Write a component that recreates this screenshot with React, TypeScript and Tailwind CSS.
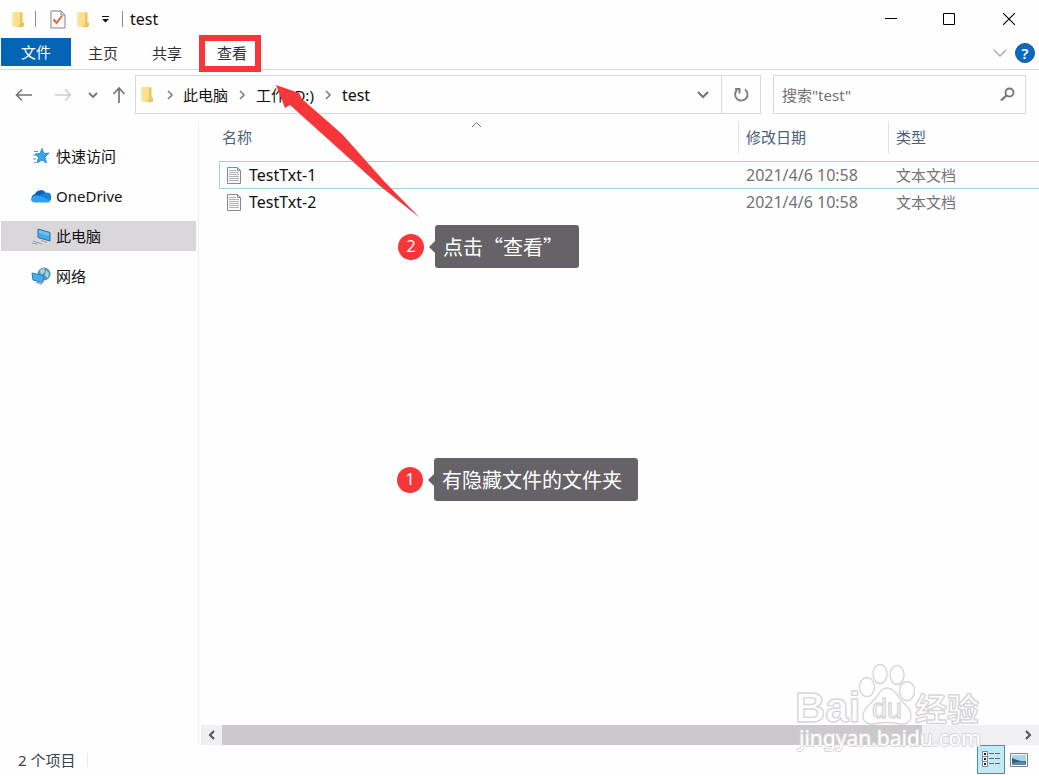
import React from "react";

const files = [
  { name: "TestTxt-1", date: "2021/4/6 10:58", type: "文本文档", focused: true },
  { name: "TestTxt-2", date: "2021/4/6 10:58", type: "文本文档", focused: false },
];

const FolderIcon = () => (
  <svg width="14" height="17" viewBox="0 0 14 17">
    <path d="M1 1h9v11l-2 4-7-1z" fill="#f6d57a" />
    <path d="M1 1h2v15l-2-1z" fill="#fae8ae" />
    <path d="M9 1.500h2.500v10H13V15l-1 1H6l3-3z" fill="#ecc45f" />
    <path d="M3 1h6v12l-2 2.500H3z" fill="#fbe08e" />
  </svg>
);

const CheckDocIcon = () => (
  <svg width="16" height="19" viewBox="0 0 16 19">
    <path d="M1 1h10l4 4v13H1z" fill="#fafafa" stroke="#858589" />
    <path d="M11 1v4h4" fill="none" stroke="#858589" />
    <path d="M3.500 9.500l3 3.500 5.500-7" fill="none" stroke="#dd6a3c" strokeWidth="2" />
  </svg>
);

const TextFileIcon = () => (
  <svg width="16" height="19" viewBox="0 0 16 19">
    <path d="M1.500 1.500h10l3 3v13h-13z" fill="#fbfbfb" stroke="#89878b" />
    <path d="M11.500 1.500v3h3" fill="none" stroke="#89878b" />
    <path
      d="M3 4.500h7M3 6.500h10M3 8.500h10M3 10.500h10M3 12.500h10M3 14.500h10"
      stroke="#b3b1b5"
    />
  </svg>
);

const ChevronRight = () => (
  <svg width="8" height="10" viewBox="0 0 8 10" fill="none" stroke="#7a787c" strokeWidth="1.5">
    <path d="M2 1l4 4-4 4" />
  </svg>
);

const StarIcon = () => (
  <svg width="20" height="18" viewBox="0 0 20 18">
    <path
      d="M11 1.500l2 5 5-.5-4 4 1.500 6-4.500-3-5 3 1.500-5.500L4 7l5-.5z"
      fill="#35a5ee"
      stroke="#1f7fc4"
      strokeWidth="0.8"
    />
    <path d="M3 4.500h4M2 8h3M2 12h3M3 15.500h2" stroke="#4a9ccf" />
  </svg>
);

const CloudIcon = () => (
  <svg width="20" height="14" viewBox="0 0 20 14">
    <path d="M4 5a6 5.500 0 0 1 11-1L10 9 2 12A4 4 0 0 1 4 5z" fill="#0c5fb5" />
    <path d="M14.500 4a4.500 4.500 0 0 1 4 8L8 8c2-3 4-4.500 6.500-4z" fill="#1583d8" />
    <path d="M0 10C1 7 6 5 9 7l10.500 4.500c-.5 1-1.500 2-2.500 2H4C1.500 13.500 0 12 0 10z" fill="#2ba2ed" />
  </svg>
);

const ComputerIcon = () => (
  <svg width="20" height="18" viewBox="0 0 20 18">
    <path d="M7 2l12 3.500v8.500L7 10.500z" fill="#43abee" stroke="#3b6f9b" />
    <path d="M8 3l10 3v3L8 6z" fill="#6cc3f7" />
    <path d="M10 13l6 2.500M2 14l9 3M1 16l5 1" stroke="#9b9ca4" />
  </svg>
);

const NetworkIcon = () => (
  <svg width="20" height="18" viewBox="0 0 20 18">
    <circle cx="13" cy="7" r="6.500" fill="#5793b5" />
    <path d="M9 3l4-2 1 4-4 3zM15 3l3 3-1 5-3-2z" fill="#a8d4df" />
    <path d="M1 6l11 2.500v7L2 13z" fill="#43b1f1" stroke="#2b7eb5" />
    <path d="M5 15l6 2" stroke="#8aa1ae" strokeWidth="1.500" />
  </svg>
);

const places = [
  { label: "快速访问", icon: <StarIcon />, active: false },
  { label: "OneDrive", icon: <CloudIcon />, active: false },
  { label: "此电脑", icon: <ComputerIcon />, active: true },
  { label: "网络", icon: <NetworkIcon />, active: false },
];

const TitleBar = () => (
  <header className="flex h-[38px] items-center pl-[11px]">
    <FolderIcon />
    <span className="ml-2.5 h-4 w-px bg-[#8d8b8f]" />
    <button type="button" aria-label="属性" className="ml-3.5">
      <CheckDocIcon />
    </button>
    <button type="button" aria-label="新建文件夹" className="ml-2.5">
      <FolderIcon />
    </button>
    <button type="button" aria-label="自定义快速访问工具栏" className="ml-[11px]">
      <svg width="9" height="8" viewBox="0 0 9 8">
        <path d="M1 1.500h7" stroke="#111" />
        <path d="M1 4h7L4.500 7.500z" fill="#111" />
      </svg>
    </button>
    <span className="ml-3 h-4 w-px bg-[#8d8b8f]" />
    <h1 className="ml-[7px] text-base leading-5">test</h1>
    <div className="ml-auto flex h-full">
      <button type="button" aria-label="最小化" className="flex w-[58px] items-center justify-center">
        <svg width="12" height="12" viewBox="0 0 12 12" stroke="#000">
          <path d="M0 5.500h12" />
        </svg>
      </button>
      <button type="button" aria-label="最大化" className="flex w-[58px] items-center justify-center">
        <svg width="12" height="12" viewBox="0 0 12 12" fill="none" stroke="#000">
          <path d="M.5.5h11v11H.5z" />
        </svg>
      </button>
      <button type="button" aria-label="关闭" className="flex w-[61px] items-center justify-center">
        <svg width="12" height="12" viewBox="0 0 12 12" stroke="#000" strokeWidth="1.100">
          <path d="M0 0l12 12M12 0L0 12" />
        </svg>
      </button>
    </div>
  </header>
);

const Ribbon = () => (
  <nav className="flex h-8 border-b border-[#d9d8da] pl-px leading-5">
    <button type="button" className="h-7 w-[70px] bg-[#0564b4] text-white">
      文件
    </button>
    <button type="button" className="h-[30px] w-16 text-[#2f2e31]">
      主页
    </button>
    <button type="button" className="h-[30px] w-16 text-[#2f2e31]">
      共享
    </button>
    <button type="button" className="relative h-[30px] w-[66px] text-[#2f2e31]">
      查看
      {/* Highlight frame */}
      <span className="absolute -top-[3px] left-0 h-[37px] w-[62px] border-6 border-[#f63638]" />
    </button>
    <div className="ml-auto flex items-center gap-2 pr-1 pb-0.5">
      <button type="button" aria-label="展开功能区">
        <svg width="14" height="8" viewBox="0 0 14 8" fill="none" stroke="#aaa8ac" strokeWidth="1.300">
          <path d="M1 1l6 6 6-6" />
        </svg>
      </button>
      <button
        type="button"
        aria-label="帮助"
        className="h-5 w-5 rounded-full border border-[#24517c] bg-[#0c69c3] text-[15px] leading-[18px] font-semibold text-white"
      >
        ?
      </button>
    </div>
  </nav>
);

const AddressBar = () => (
  <div className="flex h-[51px] pt-[5px] pr-[13px]">
    <div className="flex h-[39px] w-[135px] shrink-0 items-center pl-[15px] text-[#747276]">
      <button type="button" aria-label="后退">
        <svg width="18" height="14" viewBox="0 0 18 14" fill="none" stroke="currentColor" strokeWidth="1.600">
          <path d="M17 7H2M7 1.500L1.500 7 7 12.500" />
        </svg>
      </button>
      <button type="button" aria-label="前进" className="ml-[21px] text-[#cfcdd1]">
        <svg width="18" height="14" viewBox="0 0 18 14" fill="none" stroke="currentColor" strokeWidth="1.500">
          <path d="M1 7h15M11 1.500L16.500 7 11 12.500" />
        </svg>
      </button>
      <button type="button" aria-label="最近位置" className="ml-4">
        <svg width="10" height="8" viewBox="0 0 10 8" fill="none" stroke="currentColor" strokeWidth="1.800">
          <path d="M1 2l4 4 4-4" />
        </svg>
      </button>
      <button type="button" aria-label="上移" className="ml-3.5">
        <svg width="14" height="17" viewBox="0 0 14 17" fill="none" stroke="currentColor" strokeWidth="1.700">
          <path d="M7 17V2M1.500 8L7 2l5.500 6" />
        </svg>
      </button>
    </div>

    <div className="flex h-[39px] min-w-0 flex-1 items-center border border-[#d9d8da] pl-1">
      <FolderIcon />
      <span className="mr-[9px] ml-3">
        <ChevronRight />
      </span>
      <a href="#pc">此电脑</a>
      <span className="mx-2.5">
        <ChevronRight />
      </span>
      <a href="#d">工作 (D:)</a>
      <span className="mx-2.5">
        <ChevronRight />
      </span>
      <a href="#test" className="text-base leading-5">
        test
      </a>
      <button type="button" aria-label="历史记录" className="mr-3 ml-auto">
        <svg width="12" height="8" viewBox="0 0 12 8" fill="none" stroke="#747276" strokeWidth="2">
          <path d="M1 1l5 5 5-5" />
        </svg>
      </button>
      <button
        type="button"
        aria-label="刷新"
        className="flex h-full w-[39px] items-center justify-center border-l border-[#d9d8da]"
      >
        <svg width="16" height="16" viewBox="0 0 16 16" fill="none" stroke="#7d7b7f" strokeWidth="1.900">
          <path d="M12 2.500A6.200 6.200 0 1 1 4 3" />
          <path d="M2 2h4.500v4.500" />
        </svg>
      </button>
    </div>

    <div className="ml-3 flex h-[39px] w-[253px] items-center border border-[#d9d8da] pr-[9px] pl-2">
      <input
        type="text"
        aria-label="搜索"
        placeholder={'搜索"test"'}
        className="min-w-0 flex-1 bg-transparent outline-none placeholder:text-[#737175]"
      />
      <button type="button" aria-label="开始搜索">
        <svg width="17" height="15" viewBox="0 0 17 15" fill="none" stroke="#747276" strokeWidth="1.800">
          <circle cx="10.500" cy="5.500" r="4" />
          <path d="M7.500 8.500L2 13.500" strokeWidth="2.200" />
        </svg>
      </button>
    </div>
  </div>
);

const Sidebar = () => (
  <aside className="flex w-[199px] shrink-0 flex-col gap-2.5 border-r border-[#efeef0] pt-5 pr-0.5 pl-px">
    {places.map((place) => (
      <a
        key={place.label}
        href={"#" + place.label}
        className={
          place.active
            ? "flex h-[30px] items-center gap-[5px] bg-[#d9d7da] pl-[30px]"
            : "flex h-[30px] items-center gap-[5px] pl-[30px]"
        }
      >
        {place.icon}
        {place.label}
      </a>
    ))}
  </aside>
);

const FileTable = () => (
  <div className="relative flex-1 overflow-hidden pl-5">
    <table className="w-full table-fixed border-separate border-spacing-0 text-left">
      <thead className="text-[#4c6078]">
        <tr>
          <th className="w-[519px] p-0 pb-2 font-normal">
            <div className="h-8 pl-[3px] leading-8">名称</div>
          </th>
          <th className="w-[150px] p-0 pb-2 font-normal">
            <div className="h-8 border-l border-[#e2e1e3] pl-[7px] leading-8">修改日期</div>
          </th>
          <th className="p-0 pb-2 font-normal">
            <div className="h-8 border-l border-[#e2e1e3] pl-[7px] leading-8">类型</div>
          </th>
        </tr>
      </thead>
      <tbody>
        {files.map((file) => {
          const line = file.focused ? "border-y border-[#a5cfe0]" : "";
          return (
            <tr key={file.name} className="leading-[26px]">
              <td
                className={
                  "p-0 text-base leading-[26px] " +
                  (file.focused ? "border border-r-0 border-[#a5cfe0]" : "border-l border-transparent")
                }
              >
                <span className="flex h-[26px] items-center gap-[7px] pl-1.5">
                  <TextFileIcon />
                  {file.name}
                </span>
              </td>
              <td className={"p-0 pl-2 text-base leading-[26px] text-[#737175] " + line}>{file.date}</td>
              <td className={"p-0 pl-2 leading-[26px] text-[#737175] " + line}>{file.type}</td>
            </tr>
          );
        })}
      </tbody>
    </table>
    {/* Sort direction mark */}
    <svg
      className="absolute top-0 left-[272px]"
      width="11"
      height="7"
      viewBox="0 0 11 7"
      fill="none"
      stroke="#6d6b6f"
    >
      <path d="M1 6l4.500-4.500L10 6" />
    </svg>
  </div>
);

const ScrollBar = () => (
  <div className="ml-0.5 flex h-5 bg-[#f0eff1]">
    <button type="button" aria-label="向左滚动" className="flex w-[21px] items-center justify-center">
      <svg width="8" height="10" viewBox="0 0 8 10" fill="none" stroke="#535155" strokeWidth="2">
        <path d="M6 1L2 5l4 4" />
      </svg>
    </button>
    <div className="flex-1">
      <div className="h-full w-[88%] bg-[#cbc9cc]" />
    </div>
    <button type="button" aria-label="向右滚动" className="flex w-[22px] items-center justify-center">
      <svg width="8" height="10" viewBox="0 0 8 10" fill="none" stroke="#535155" strokeWidth="2">
        <path d="M2 1l4 4-4 4" />
      </svg>
    </button>
  </div>
);

const StatusBar = () => (
  <footer className="flex h-[31px] items-center pb-0.5 pl-[18px] text-[#344352]">
    <span>2 个项目</span>
    <span className="ml-3 h-3.5 w-px bg-[#ecebed]" />
    <div className="ml-auto flex items-center gap-[5px] pr-[11px]">
      <button
        type="button"
        aria-label="详细信息"
        className="flex h-[29px] w-7 items-center justify-center border border-[#3f96ab] bg-[#c5e8f4]"
      >
        <svg width="19" height="17" viewBox="0 0 19 17" fill="none">
          <path d="M.5.5h5v5h-5zM.5 5.500h5v5h-5zM.5 10.500h5v5h-5z" fill="#fff" stroke="#6e8894" />
          <path d="M2 3h2M2 8h2M2 13h2" stroke="#222" strokeWidth="2" />
          <path d="M7 2.500h5M13 2.500h5M7 7.500h5M13 7.500h5M7 12.500h5M13 12.500h5" stroke="#58707b" />
        </svg>
      </button>
      <button type="button" aria-label="大图标">
        <svg width="18" height="14" viewBox="0 0 18 14">
          <path d="M.5.5h17v13H.5z" fill="#fff" stroke="#807e88" />
          <path d="M2 2h14v10H2z" fill="#a9d5ec" />
          <path d="M2 5c4 1 6 4 14 3v4H2z" fill="#315e6b" />
          <path d="M2 10c5-1 9-2 14 0v2H2z" fill="#568bb6" />
        </svg>
      </button>
    </div>
  </footer>
);

const Callout = ({ step, text, place, box }: { step: number; text: string; place: string; box: string }) => (
  <div className={"absolute flex items-center " + place}>
    <span className="flex h-[26px] w-[26px] items-center justify-center rounded-full bg-[#f63638] pb-0.5 text-base leading-5 text-white">
      {step}
    </span>
    <svg className="ml-[5px]" width="6" height="12" viewBox="0 0 6 12">
      <path d="M6 0v12L0 6z" fill="#656367" />
    </svg>
    <span
      className={
        "h-[43px] rounded-[3px] bg-[#656367] pl-2 font-['Noto_Sans_CJK_SC',sans-serif] text-xl leading-[43px] text-white " + box
      }
    >
      {text}
    </span>
  </div>
);

const Watermark = () => (
  <svg
    className="pointer-events-none absolute right-[51px] bottom-3.5"
    width="194"
    height="98"
    viewBox="0 0 194 98"
    fill="#fff"
    fillOpacity="0.75"
    stroke="#d8d6d9"
    strokeWidth="1.400"
    strokeLinejoin="round"
    fontFamily="'Liberation Sans', 'Noto Sans CJK SC', sans-serif"
  >
    <ellipse cx="73" cy="23" rx="7.500" ry="9.500" />
    <ellipse cx="86" cy="10" rx="7" ry="9.500" />
    <ellipse cx="103" cy="11" rx="7" ry="9.500" />
    <ellipse cx="113" cy="27" rx="7.500" ry="9.500" />
    <path d="M93 24c7 0 10 7 14 12 5 6 10 9 10 16 0 6-5 9-11 8-9-2-17-2-26 0-6 1-11-2-11-8 0-8 7-11 12-17 4-5 6-11 12-11z" />
    <text x="1" y="58" fontSize="42" fontWeight="700">
      Bai
    </text>
    <text x="78" y="54" fontSize="27">
      du
    </text>
    <text x="121" y="57" fontSize="32" fontWeight="700">
      经验
    </text>
    <text
      x="5"
      y="82"
      fontSize="21"
      fontFamily="'Noto Sans', sans-serif"
      paintOrder="stroke"
      strokeWidth="2"
      fillOpacity="1"
    >
      jingyan.baidu.com
    </text>
  </svg>
);

const App = () => {
  return (
    <div className="relative flex min-h-screen flex-col overflow-hidden bg-[#fefefe] font-['Noto_Sans','Noto_Sans_CJK_SC',sans-serif] text-[15px] leading-5 text-[#121113]">
      <TitleBar />
      <Ribbon />
      <AddressBar />

      <div className="flex flex-1">
        <Sidebar />
        <main className="flex min-w-0 flex-1 flex-col">
          <FileTable />
          <ScrollBar />
        </main>
      </div>

      <StatusBar />

      {/* Arrow to the view tab */}
      <svg
        className="pointer-events-none absolute top-[85px] left-[276px]"
        width="145"
        height="134"
        viewBox="0 0 145 134"
      >
        <path d="M0 0l23 8 3 6 40 35 41 46 37 38-40-32-40-36-50-45-5 3z" fill="#f63638" />
      </svg>

      <Callout step={2} text="点击“查看”" place="top-[225px] left-[398px]" box="w-36" />
      <Callout step={1} text="有隐藏文件的文件夹" place="top-[458px] left-[397px]" box="w-51" />

      <Watermark />
    </div>
  );
};

export default App;
